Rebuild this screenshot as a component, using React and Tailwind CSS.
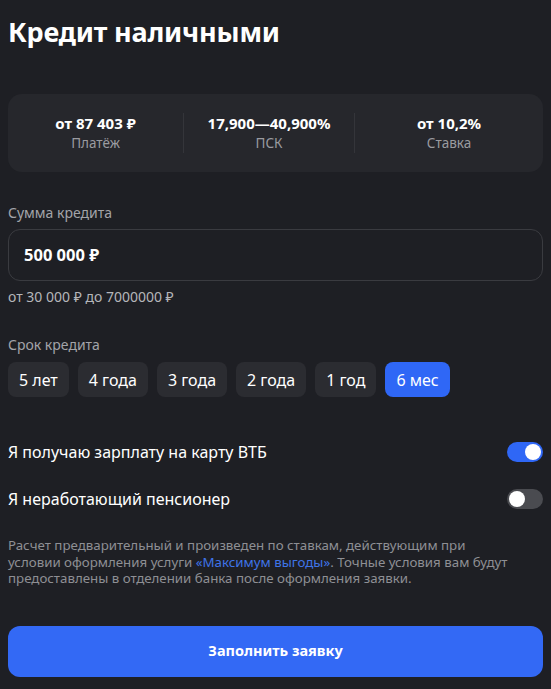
import { useState } from 'react';

const terms = ["5 лет", "4 года", "3 года", "2 года", "1 год", "6 мес"];

const Toggle = ({ on, onClick }) => (
    <button
        onClick={onClick}
        className={`relative w-[36px] h-[20px] rounded-full transition ${on ? "bg-[#2f67f6]" : "bg-[#4a4b50]"}`}
    >
        <span
            className={`absolute top-[2px] w-[16px] h-[16px] rounded-full bg-white transition-all ${on ? "left-[18px]" : "left-[2px]"}`}
        />
    </button>
);

const App = () => {
    const [term, setTerm] = useState("6 мес");
    const [salary, setSalary] = useState(true);
    const [pensioner, setPensioner] = useState(false);

    return (
        <div
            className="min-h-[689px] bg-[#1e1f24] text-white px-2"
            style={{ fontFamily: '"Noto Sans", "Open Sans", sans-serif' }}
        >
            <h1 className="pt-[13px] text-[27px] leading-[38px] font-bold tracking-[-0.2px]">Кредит наличными</h1>

            <div className="mt-[43px] h-[78px] rounded-[14px] bg-[#26272c] grid grid-cols-[175px_172px_1fr] items-center">
                <div className="flex flex-col items-center">
                    <span className="text-[15px] leading-[20px] font-bold">от 87 403 ₽</span>
                    <span className="text-[13.5px] leading-[21px] text-[#9a9ba0]">Платёж</span>
                </div>
                <div className="flex flex-col items-center border-l border-r border-[#34353a] h-[40px] justify-center">
                    <span className="text-[15px] leading-[20px] font-bold">17,900—40,900%</span>
                    <span className="text-[13.5px] leading-[21px] text-[#9a9ba0]">ПСК</span>
                </div>
                <div className="flex flex-col items-center">
                    <span className="text-[15px] leading-[20px] font-bold">от 10,2%</span>
                    <span className="text-[13.5px] leading-[21px] text-[#9a9ba0]">Ставка</span>
                </div>
            </div>

            <div className="mt-[31px] text-[14px] leading-[20px] text-[#a3a4a9]">Сумма кредита</div>
            <div className="mt-[6px] h-[52px] rounded-[12px] border border-[#3a3b40] flex items-center px-[15px]">
                <span className="text-[16.5px] font-bold">500 000 ₽</span>
            </div>
            <div className="mt-[7px] text-[14px] leading-[18px] text-[#b5b6ba]">от 30 000 ₽ до 7000000 ₽</div>

            <div className="mt-[29px] text-[14px] leading-[20px] text-[#a3a4a9]">Срок кредита</div>
            <div className="mt-[7px] flex gap-[9px]">
                {terms.map((t) => (
                    <button
                        key={t}
                        onClick={() => setTerm(t)}
                        className={`h-[35px] px-[11px] rounded-[8px] text-[16px] ${term === t ? "bg-[#2f67f6]" : "bg-[#2b2c31]"}`}
                    >
                        {t}
                    </button>
                ))}
            </div>

            <div className="mt-[44px] flex items-center justify-between">
                <span className="text-[16px] leading-[22px]">Я получаю зарплату на карту ВТБ</span>
                <Toggle on={salary} onClick={() => setSalary(!salary)} />
            </div>
            <div className="mt-[25px] flex items-center justify-between">
                <span className="text-[16px] leading-[22px]">Я неработающий пенсионер</span>
                <Toggle on={pensioner} onClick={() => setPensioner(!pensioner)} />
            </div>

            <p className="mt-[27px] text-[13.3px] leading-[16.5px] text-[#8e8f94]">
                Расчет предварительный и произведен по ставкам, действующим при<br />
                условии оформления услуги{' '}
                <span className="text-[#3f74e8]">«Максимум выгоды»</span>. Точные условия вам будут предоставлены в отделении банка после оформления заявки.
            </p>

            <button className="mt-[39px] w-full h-[51px] rounded-[12px] bg-[#3369f5] text-[14.5px] font-bold">
                Заполнить заявку
            </button>
        </div>
    );
};

export default App;
